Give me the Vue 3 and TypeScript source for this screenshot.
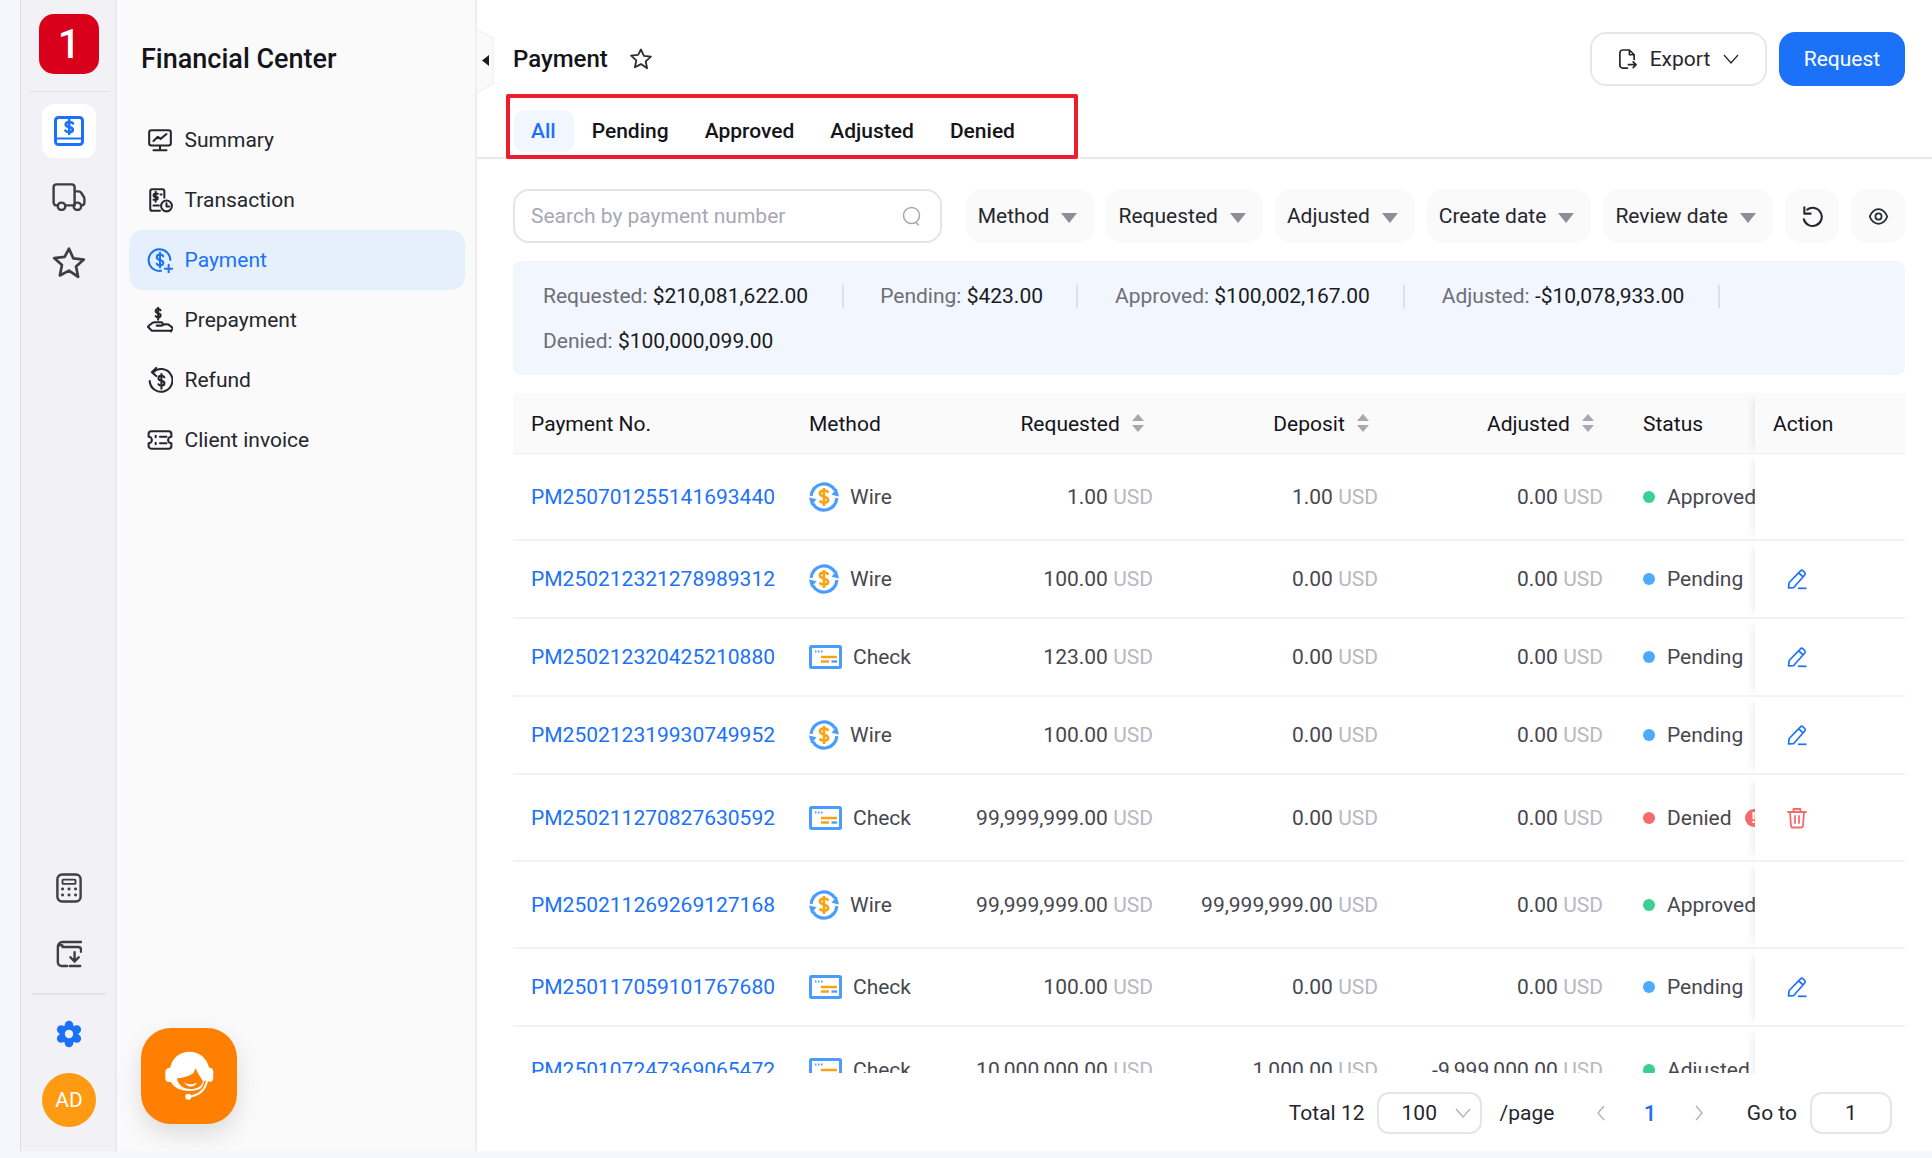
<script setup lang="ts">
interface NavItem {
  label: string;
  d: string;
  active?: boolean;
}

interface PaymentRow {
  no: string;
  method: 'Wire' | 'Check';
  requested: string;
  deposit: string;
  adjusted: string;
  status: 'Approved' | 'Pending' | 'Denied' | 'Adjusted';
  tall?: boolean;
}

const navItems: NavItem[] = [
  {
    label: 'Summary',
    d: 'M4 3h16a2 2 0 0 1 2 2v10a2 2 0 0 1-2 2H4a2 2 0 0 1-2-2V5a2 2 0 0 1 2-2zM12 17v4.5M6 21.5h12M6 13l4-4 2.5 2L18 6.5',
  },
  {
    label: 'Transaction',
    d: 'M5 2h9a2 2 0 0 1 2 2v6M12 22H5a2 2 0 0 1-2-2V4a2 2 0 0 1 2-2M10 6.2H7.5a1.3 1.3 0 0 0 0 2.8h1a1.3 1.3 0 0 1 0 2.8H6M8 4.5v9M12.5 7h1M6 17h5M23 17.5a5 5 0 1 1-10 0 5 5 0 0 1 10 0zM18 15v3h2.5',
  },
  {
    label: 'Payment',
    active: true,
    d: 'M21.5 12A10 10 0 1 0 13 22M15 8.5c-.5-1-1.6-1.5-3-1.5-1.8 0-3 1-3 2.4s1.2 2.1 3 2.6 3 1.2 3 2.6-1.2 2.4-3 2.4c-1.4 0-2.5-.5-3-1.5M12 5v14M20 16.5v7M16.5 20h7',
  },
  {
    label: 'Prepayment',
    d: 'M12.5 3c-.4-.8-1.2-1.2-2.2-1.2-1.3 0-2.3.8-2.3 1.9s1 1.7 2.3 2 2.3 1 2.3 2-1 1.9-2.3 1.9c-1 0-1.8-.4-2.2-1.2M10.3.2v11.5M1 18l3.5-3c1-.8 2-1 3-1H13a1.6 1.6 0 0 1 0 3.2H9M14.5 16.5l3-.5c1.5-.2 3 .5 3.5 1l3 2.5-2 3M1 18.5L4.5 22h17',
  },
  {
    label: 'Refund',
    d: 'M5.5 5A10.5 10.5 0 1 1 2.5 13M8.5.8l-4 4 4 3.5M16 9.5c-.5-.9-1.5-1.3-2.7-1.3-1.6 0-2.8.9-2.8 2.2s1.2 1.9 2.8 2.3 2.8 1.1 2.8 2.3-1.2 2.2-2.8 2.2c-1.2 0-2.2-.4-2.7-1.3M13.3 6.5V20',
  },
  {
    label: 'Client invoice',
    d: 'M4 4h16a2.5 2.5 0 0 1 2.5 2.5V9a3 3 0 0 0 0 6v2.5A2.5 2.5 0 0 1 20 20H4a2.5 2.5 0 0 1-2.5-2.5V15a3 3 0 0 0 0-6V6.5A2.5 2.5 0 0 1 4 4zM8 8v1.5M8 14.5V16M12 9h6M12 15h6',
  },
];

const tabs = ['All', 'Pending', 'Approved', 'Adjusted', 'Denied'];
const filters = ['Method', 'Requested', 'Adjusted', 'Create date', 'Review date'];

const totals = [
  { label: 'Requested:', value: '$210,081,622.00' },
  { label: 'Pending:', value: '$423.00' },
  { label: 'Approved:', value: '$100,002,167.00' },
  { label: 'Adjusted:', value: '-$10,078,933.00' },
  { label: 'Denied:', value: '$100,000,099.00' },
];

const rows: PaymentRow[] = [
  { no: 'PM250701255141693440', method: 'Wire', requested: '1.00', deposit: '1.00', adjusted: '0.00', status: 'Approved', tall: true },
  { no: 'PM250212321278989312', method: 'Wire', requested: '100.00', deposit: '0.00', adjusted: '0.00', status: 'Pending' },
  { no: 'PM250212320425210880', method: 'Check', requested: '123.00', deposit: '0.00', adjusted: '0.00', status: 'Pending' },
  { no: 'PM250212319930749952', method: 'Wire', requested: '100.00', deposit: '0.00', adjusted: '0.00', status: 'Pending' },
  { no: 'PM250211270827630592', method: 'Check', requested: '99,999,999.00', deposit: '0.00', adjusted: '0.00', status: 'Denied', tall: true },
  { no: 'PM250211269269127168', method: 'Wire', requested: '99,999,999.00', deposit: '99,999,999.00', adjusted: '0.00', status: 'Approved', tall: true },
  { no: 'PM250117059101767680', method: 'Check', requested: '100.00', deposit: '0.00', adjusted: '0.00', status: 'Pending' },
  { no: 'PM250107247369065472', method: 'Check', requested: '10,000,000.00', deposit: '1,000.00', adjusted: '-9,999,000.00', status: 'Adjusted', tall: true },
];

const sortable = ['Requested', 'Deposit', 'Adjusted'];

// six lobes round the settings gear
const gearLobes = [0, 1, 2, 3, 4, 5].map((i) => {
  const angle = (Math.PI / 3) * i - Math.PI / 2;
  return { cx: 13 + 9 * Math.cos(angle), cy: 14 + 9 * Math.sin(angle) };
});
</script>

<template>
  <div class="page">
    <div class="page__body">
      <aside class="rail">
        <div class="rail__logo">1</div>
        <div class="rail__line"></div>
        <div class="rail__item rail__item--active">
          <svg width="30" height="30" viewBox="0 0 30 30" fill="none" stroke="#1b72f9" stroke-width="3" stroke-linecap="round" stroke-linejoin="round">
            <rect x="1.5" y="1.5" width="27" height="27" rx="3" />
            <path d="M2 22.5h26" stroke-width="2.2" />
            <path d="M19 7.5c-.6-1-2-1.5-3.8-1.5-2 0-3.500.9-3.500 2.500s1.500 2.200 3.500 2.600 3.600 1 3.600 2.600-1.500 2.500-3.600 2.500c-1.800 0-3.200-.5-3.800-1.500M15.200 4v14" stroke-width="2.6" />
          </svg>
        </div>
        <div class="rail__item">
          <svg width="34" height="28" viewBox="0 0 36 30" fill="none" stroke="#3d3f45" stroke-width="2.6" stroke-linecap="round" stroke-linejoin="round">
            <path d="M23 24h-9M6 24H4.500a3 3 0 0 1-3-3V4.500a3 3 0 0 1 3-3H21a3 3 0 0 1 3 3V24M24 9h4.500c1 0 1.900.5 2.500 1.400l3 4.600c.3.500.5 1 .5 1.600V21a3 3 0 0 1-3 3h-.5" />
            <path d="M14 25a4 4 0 1 1-8 0 4 4 0 0 1 8 0zM31 25a4 4 0 1 1-8 0 4 4 0 0 1 8 0z" />
          </svg>
        </div>
        <div class="rail__item">
          <svg width="36" height="36" viewBox="0 0 24 24" fill="none" stroke="#3d3f45" stroke-width="1.8" stroke-linejoin="round">
            <path d="M12 2.500l2.900 6.400 7 .8-5.200 4.700 1.400 6.900L12 17.100l-6.100 3.200 1.400-6.900-5.200-4.700 7-.8z" />
          </svg>
        </div>
        <div class="rail__spacer"></div>
        <div class="rail__item">
          <svg width="26" height="30" viewBox="0 0 28 32" fill="none" stroke="#3d3f45" stroke-width="2.6">
            <rect x="1.5" y="1.5" width="25" height="29" rx="5" />
            <rect x="7" y="7" width="14" height="4.5" rx="1" stroke-width="2" />
            <path d="M7 17h.1M14 17h.1M21 17h.1M7 23.5h.1M14 23.5h.1M21 23.5h.1" stroke-width="3.2" stroke-linecap="round" />
          </svg>
        </div>
        <div class="rail__item">
          <svg width="26" height="28" viewBox="0 0 28 30" fill="none" stroke="#3d3f45" stroke-width="2.6" stroke-linecap="round">
            <path d="M27 2H7a5 5 0 0 0-5 5v17a4 4 0 0 0 4 4h6M7 7.5h17a3 3 0 0 1 3 3v2M2 7a4 4 0 0 1 5-1" />
            <path d="M20 13v10M15.500 18.500l4.500 4.500 4.500-4.500M15 28h11" />
          </svg>
        </div>
        <div class="rail__line rail__line--thick"></div>
        <div class="rail__item">
          <svg width="26" height="28" viewBox="0 0 26 28">
            <circle cx="13" cy="14" r="9.5" fill="#1b72f9" />
            <circle v-for="(lobe, i) in gearLobes" :key="i" :cx="lobe.cx" :cy="lobe.cy" r="4.3" fill="#1b72f9" />
            <circle cx="13" cy="14" r="4.2" fill="#f1f1f6" />
          </svg>
        </div>
        <div class="rail__avatar">AD</div>
      </aside>

      <nav class="side">
        <h2 class="side__title">Financial Center</h2>
        <a v-for="item in navItems" :key="item.label" class="side__item" :class="{ 'side__item--active': item.active }">
          <svg class="side__icon" width="26" height="26" viewBox="0 0 24 24" fill="none" stroke="currentColor" stroke-width="1.9" stroke-linecap="round" stroke-linejoin="round">
            <path :d="item.d" />
          </svg>
          <span>{{ item.label }}</span>
        </a>
        <button class="support">
          <svg width="96" height="96" viewBox="0 0 96 96">
            <path d="M28 54c-2.500 0-3.700-2-3.700-4v-6c0-2.500 2-4 5-4.500C31 30 39 23.700 48.500 23.700S66 30 68 39.500c3 .5 4.300 2 4.300 4.500v6c0 2-1.500 4-4 4h-2c-2 5-9 9-17.800 9S32 59 30 54z" fill="#fff" />
            <path d="M36 50.300C42 50 48 48 52.300 45.300L54.700 40.300C57 46 60 50 62.300 53.700 60 59 55 61 49 61 42 61 37 57 36 50.300z" fill="#ff8000" />
            <path d="M43 54c3 3 9 3 13 .5C54 60 46 60 43 54z" fill="#fff" />
            <path d="M66 53c-2 9-8 14.500-18 15.700" fill="none" stroke="#ff8000" stroke-width="5" />
            <path d="M66 53c-2 9-8 14.500-18 15.700" fill="none" stroke="#fff" stroke-width="2" stroke-linecap="round" />
            <circle cx="47.3" cy="68.7" r="3" fill="#fff" />
          </svg>
        </button>
      </nav>

      <main class="main">
        <svg class="collapse" width="18" height="66" viewBox="0 0 18 66">
          <path d="M0 1l17 9v46L0 65z" fill="#fafafa" stroke="#ececf0" />
          <path d="M13 27v11l-7-5.500z" fill="#1a1a22" />
        </svg>

        <header class="head">
          <h1 class="head__title">Payment</h1>
          <svg class="head__star" width="24" height="24" viewBox="0 0 24 24" fill="none" stroke="#2a2c33" stroke-width="1.8" stroke-linejoin="round">
            <path d="M12 2.500l2.900 6.400 7 .8-5.200 4.700 1.400 6.900L12 17.100l-6.100 3.200 1.400-6.900-5.200-4.700 7-.8z" />
          </svg>
          <button class="btn btn--ghost">
            <svg width="19" height="23" viewBox="0 0 20 24" fill="none" stroke="#26282e" stroke-width="1.8" stroke-linecap="round" stroke-linejoin="round">
              <path d="M10 21H5a3 3 0 0 1-3-3V5a3 3 0 0 1 3-3h7l5 5v5M12 2.500V7h4.500M11 17.500h8M16 14.500l3 3-3 3" />
            </svg>
            <span>Export</span>
            <svg width="16" height="10" viewBox="0 0 16 10" fill="none" stroke="#26282e" stroke-width="1.3">
              <path d="M1 1l7 8 7-8" />
            </svg>
          </button>
          <button class="btn btn--primary">Request</button>
        </header>

        <div class="tabs">
          <span v-for="(tab, i) in tabs" :key="tab" class="tabs__item" :class="{ 'tabs__item--active': i === 0 }">{{ tab }}</span>
        </div>
        <div class="mark"></div>

        <div class="content">
          <div class="tools">
            <div class="search">
              <span>Search by payment number</span>
              <svg width="22" height="22" viewBox="0 0 22 22" fill="none" stroke="#a8a8b2" stroke-width="1.5" stroke-linecap="round">
                <circle cx="10.5" cy="10.5" r="8" />
                <path d="M15 17.500l2.500 2.500" />
              </svg>
            </div>
            <div v-for="f in filters" :key="f" class="filter">
              <span>{{ f }}</span>
              <i class="filter__arrow"></i>
            </div>
            <div class="filter filter--icon">
              <svg width="23" height="23" viewBox="0 0 24 24" fill="none" stroke="#26282e" stroke-width="2.2" stroke-linecap="round" stroke-linejoin="round">
                <path d="M6.500 4.800A9.500 9.500 0 1 1 3 15M3.500 2.500v6.500H10" />
              </svg>
            </div>
            <div class="filter filter--icon">
              <svg width="21" height="21" viewBox="0 0 24 24" fill="none" stroke="#26282e" stroke-width="2">
                <path d="M12 3.500c4.500 0 8.500 4 10 8.500-1.500 4.500-5.500 8.500-10 8.500S3.500 16.500 2 12c1.500-4.500 5.500-8.500 10-8.500z" />
                <circle cx="12" cy="12" r="3.5" />
              </svg>
            </div>
          </div>

          <div class="totals">
            <div v-for="(t, i) in totals" :key="t.label" class="totals__item" :class="{ 'totals__item--last': i === totals.length - 1 }">
              <span class="totals__label">{{ t.label }}</span>
              {{ t.value }}
            </div>
          </div>

          <div class="table-wrap">
            <table class="table">
              <colgroup>
                <col class="col-no" />
                <col class="col-method" />
                <col class="col-requested" />
                <col class="col-amount" />
                <col class="col-amount" />
                <col class="col-status" />
                <col class="col-action" />
              </colgroup>
              <thead>
                <tr>
                  <th>Payment No.</th>
                  <th>Method</th>
                  <th v-for="h in sortable" :key="h" class="num num--head">
                    {{ h }}
                    <svg class="sort" width="14" height="20" viewBox="0 0 14 20" fill="#a8a8b0">
                      <path d="M7 1l6 7H1zM7 19l-6-7h12z" />
                    </svg>
                  </th>
                  <th class="status-cell">Status</th>
                  <th class="action-cell">Action</th>
                </tr>
              </thead>
              <tbody>
                <tr v-for="row in rows" :key="row.no" :class="row.tall ? 'row--tall' : 'row'">
                  <td class="link">{{ row.no }}</td>
                  <td>
                    <div class="method">
                      <svg v-if="row.method === 'Wire'" width="30" height="30" viewBox="1 1 28 28" fill="none">
                        <path d="M3 14A12 12 0 0 1 25.500 9M27 16A12 12 0 0 1 4.500 21" stroke="#4a9dff" stroke-width="3" />
                        <path d="M29 14.500l-7-1.500 5-6zM1 15.500l7 1.500-5 6z" fill="#4a9dff" />
                        <path d="M19 11c-.6-1.300-2.100-2-4-2-2.200 0-3.800 1.100-3.800 2.800s1.600 2.300 3.800 2.900 3.900 1.100 3.900 2.800-1.700 2.800-3.900 2.800c-1.900 0-3.400-.7-4-2M15 6.500v17" stroke="#f9a313" stroke-width="2.4" />
                      </svg>
                      <svg v-else width="33" height="24" viewBox="0 0 33 24" fill="none">
                        <rect x="1.5" y="1.5" width="30" height="21" rx="1" stroke="#4a9dff" stroke-width="3" />
                        <path d="M6 6.500h1.500M9 6.500h1.500M12 6.500h1.500" stroke="#4a9dff" stroke-width="2" />
                        <path d="M12 12h16M12 16.500h8" stroke="#f9a313" stroke-width="2.4" />
                        <path d="M22.500 16.500H28" stroke="#4a9dff" stroke-width="2.4" />
                      </svg>
                      <span>{{ row.method }}</span>
                    </div>
                  </td>
                  <td class="num">{{ row.requested }} <span class="usd">USD</span></td>
                  <td class="num">{{ row.deposit }} <span class="usd">USD</span></td>
                  <td class="num">{{ row.adjusted }} <span class="usd">USD</span></td>
                  <td class="status-cell">
                    <div class="status">
                      <i class="status__dot" :class="`status__dot--${row.status.toLowerCase()}`"></i>
                      <span>{{ row.status }}</span>
                      <b v-if="row.status === 'Denied'" class="status__warn">!</b>
                    </div>
                  </td>
                  <td class="action-cell">
                    <svg v-if="row.status === 'Pending'" width="22" height="22" viewBox="0 0 22 22" fill="none" stroke="#1b72f9" stroke-width="1.7" stroke-linejoin="round">
                      <path d="M2.500 20l.7-5.500L14.500 2.800a1.800 1.800 0 0 1 2.500 0l1.700 1.700a1.800 1.800 0 0 1 0 2.500L7.500 19.700zM12.800 4.800l4.400 4.300" />
                      <path d="M12 20.300h8.500" />
                    </svg>
                    <svg v-else-if="row.status === 'Denied'" width="22" height="22" viewBox="0 0 22 22" fill="none" stroke="#f56b6b" stroke-width="1.8" stroke-linecap="round" stroke-linejoin="round">
                      <path d="M2 5h18M7.500 5V2h7v3M4 5l1 14a2 2 0 0 0 2 1.500h8a2 2 0 0 0 2-1.500l1-14M9 9v7M13 9v7" />
                    </svg>
                  </td>
                </tr>
              </tbody>
            </table>
          </div>

          <div class="pager">
            <span>Total 12</span>
            <div class="pager__box pager__box--size">
              <span>100</span>
              <svg width="16" height="10" viewBox="0 0 16 10" fill="none" stroke="#b0b0b8" stroke-width="1.3">
                <path d="M1 1l7 8 7-8" />
              </svg>
            </div>
            <span class="pager__unit">/page</span>
            <svg class="pager__prev" width="10" height="16" viewBox="0 0 10 16" fill="none" stroke="#b0b0b8" stroke-width="1.3">
              <path d="M8 1L2 8l6 7" />
            </svg>
            <span class="pager__num">1</span>
            <svg class="pager__next" width="10" height="16" viewBox="0 0 10 16" fill="none" stroke="#b0b0b8" stroke-width="1.3">
              <path d="M2 1l6 7-6 7" />
            </svg>
            <span class="pager__goto">Go to</span>
            <div class="pager__box pager__box--input">1</div>
          </div>
        </div>
      </main>
    </div>
  </div>
</template>

<style>
html,
body {
  margin: 0;
  overflow: hidden;
  font-family: Roboto, 'Liberation Sans', sans-serif;
}
</style>

<style scoped>
.page {
  width: 1932px;
  height: 1158px;
  box-sizing: border-box;
  background: #f5f7fc;
  padding-left: 20px;
}

.page__body {
  display: flex;
  height: 1151px;
  border-left: 1px solid #dcdce2;
}

.rail {
  width: 96px;
  flex: none;
  box-sizing: border-box;
  background: #f1f1f6;
  border-right: 2px solid #e8e8ee;
  display: flex;
  flex-direction: column;
  align-items: center;
  padding: 14px 0 0 2px;
}

.rail__logo {
  width: 60px;
  height: 60px;
  background: #d9001b;
  border-radius: 15px;
  color: #fff;
  font-size: 40px;
  font-weight: 500;
  line-height: 62px;
  text-align: center;
}

.rail__line {
  width: 81px;
  height: 1px;
  background: #e2e2e8;
  margin: 17px 0 12px;
}

.rail__line--thick {
  width: 74px;
  height: 2px;
  margin: 0 0 12px;
}

.rail__item {
  width: 54px;
  height: 54px;
  display: flex;
  align-items: center;
  justify-content: center;
  margin-bottom: 12px;
}

.rail__item--active {
  background: #fff;
  border-radius: 12px;
}

.rail__spacer {
  flex: 1;
}

.rail__avatar {
  width: 54px;
  height: 54px;
  border-radius: 50%;
  background: #ff9a13;
  color: #fff;
  font-size: 21px;
  line-height: 54px;
  text-align: center;
  margin-bottom: 24px;
}

.side {
  position: relative;
  width: 360px;
  flex: none;
  box-sizing: border-box;
  background: #fafafa;
  border-right: 2px solid #eeeef2;
  padding: 0 10px 0 12px;
}

.side__title {
  margin: 0 0 35px;
  padding: 43px 0 0 12px;
  font-size: 27px;
  line-height: 32px;
  font-weight: 500;
  color: #14141a;
}

.side__item {
  height: 60px;
  display: flex;
  align-items: center;
  gap: 12px;
  padding-left: 17.5px;
  border-radius: 14px;
  font-size: 21px;
  color: #26262e;
}

.side__item--active {
  background: #e6f0fd;
  color: #1b72f9;
}

.support {
  position: absolute;
  left: 24px;
  bottom: 27px;
  width: 96px;
  height: 96px;
  padding: 0;
  border: none;
  border-radius: 30px;
  background: #ff8000;
  box-shadow: 0 10px 24px rgba(0, 0, 0, 0.12);
}

.support svg {
  display: block;
}

.main {
  position: relative;
  flex: 1;
  min-width: 0;
  background: #fff;
}

.collapse {
  position: absolute;
  left: -1px;
  top: 28px;
}

.head {
  height: 110px;
  box-sizing: border-box;
  display: flex;
  align-items: flex-start;
  padding: 32px 27px 0 36px;
}

.head__title {
  margin: 0;
  font-size: 24px;
  font-weight: 500;
  line-height: 54px;
  color: #14141a;
}

.head__star {
  margin: 15px 0 0 21px;
}

.btn {
  height: 54px;
  box-sizing: border-box;
  font-family: inherit;
  font-size: 21px;
  border-radius: 16px;
}

.btn--ghost {
  margin-left: auto;
  width: 177px;
  display: flex;
  align-items: center;
  justify-content: center;
  gap: 13px;
  background: #fff;
  border: 2px solid #e8e8ec;
  color: #26262e;
}

.btn--primary {
  margin-left: 12px;
  width: 126px;
  background: #1b72f9;
  border: none;
  color: #fff;
}

.tabs {
  height: 47px;
  display: flex;
  gap: 18px;
  padding-left: 37px;
  border-bottom: 2px solid #e8e8ec;
}

.tabs__item {
  height: 42px;
  margin-right: 18px;
  font-size: 21px;
  font-weight: 500;
  line-height: 42px;
  color: #14141a;
  border-radius: 10px;
}

.tabs__item--active {
  padding: 0 18px 0 17px;
  margin-right: 0;
  background: #f2f6fe;
  color: #1b72f9;
}

.mark {
  position: absolute;
  left: 29px;
  top: 94px;
  width: 572px;
  height: 65px;
  box-sizing: border-box;
  border: 4px solid #ee1c2e;
  border-radius: 2px;
}

.content {
  padding: 30px 27px 0 36px;
}

.tools {
  display: flex;
  gap: 12px;
  height: 54px;
}

.search {
  width: 429px;
  margin-right: 12px;
  box-sizing: border-box;
  display: flex;
  align-items: center;
  justify-content: space-between;
  padding: 0 17px 0 16px;
  border: 2px solid #e4e4ea;
  border-radius: 16px;
  font-size: 21px;
  color: #a8a8b2;
}

.filter {
  flex: none;
  display: flex;
  align-items: center;
  gap: 12px;
  padding: 0 17px 0 12px;
  background: #fafafa;
  border-radius: 16px;
  font-size: 21px;
  color: #26262e;
  white-space: nowrap;
}

.filter__arrow {
  width: 0;
  height: 0;
  border-left: 8px solid transparent;
  border-right: 8px solid transparent;
  border-top: 10px solid #8e8e98;
  margin-top: 3px;
}

.filter--icon {
  width: 54px;
  box-sizing: border-box;
  padding: 0;
  justify-content: center;
}

.totals {
  margin-top: 18px;
  height: 114px;
  box-sizing: border-box;
  padding: 13px 30px 0;
  display: flex;
  flex-wrap: wrap;
  align-content: flex-start;
  background: #f2f6fe;
  border-radius: 8px;
}

.totals__item {
  position: relative;
  height: 45px;
  line-height: 45px;
  font-size: 21px;
  color: #1a1a22;
  padding-right: 35.5px;
  margin-right: 36.5px;
}

.totals__item::after {
  content: '';
  position: absolute;
  right: 0;
  top: 11px;
  width: 2px;
  height: 23px;
  background: #dfe0e6;
}

.totals__item--last::after {
  display: none;
}

.totals__label {
  color: #6e6e78;
}

.table-wrap {
  margin-top: 18px;
  height: 680px;
  overflow: hidden;
}

.table {
  width: 1392px;
  table-layout: fixed;
  border-collapse: separate;
  border-spacing: 0;
  font-size: 21px;
  color: #47474f;
}

.col-no {
  width: 278px;
}

.col-method {
  width: 150px;
}

.col-requested {
  width: 230px;
}

.col-amount {
  width: 225px;
}

.col-status {
  width: 134px;
}

.col-action {
  width: 150px;
}

.table th {
  height: 58px;
  padding: 2px 18px 0;
  background: #fafafa;
  border-bottom: 1px solid #f0f0f3;
  font-weight: 400;
  text-align: left;
  color: #14141a;
}

.table td {
  padding: 0 18px;
  border-bottom: 2px solid #f3f3f5;
  white-space: nowrap;
}

.row td {
  height: 76px;
}

.row--tall td {
  height: 85px;
}

.table .num {
  text-align: right;
}

.table .num--head {
  padding-right: 26px;
}

.sort {
  vertical-align: -2px;
  margin-left: 6px;
}

.usd {
  color: #b8b8c2;
}

.table .link {
  color: #1b72f9;
}

.method {
  display: flex;
  align-items: center;
  gap: 11px;
}

.table .status-cell {
  padding: 2px 0 0 22px;
  overflow: hidden;
}

.table td.status-cell {
  padding-top: 0;
}

.status {
  display: flex;
  align-items: center;
}

.status__dot {
  flex: none;
  width: 12px;
  height: 12px;
  border-radius: 50%;
  margin-right: 12px;
}

.status__dot--approved,
.status__dot--adjusted {
  background: #3ad08f;
}

.status__dot--pending {
  background: #4cabff;
}

.status__dot--denied {
  background: #f56b6b;
}

.status__warn {
  flex: none;
  width: 18px;
  height: 18px;
  margin-left: 13px;
  border-radius: 50%;
  background: #f56b6b;
  color: #fff;
  font-size: 15px;
  line-height: 18px;
  text-align: center;
}

.table .action-cell {
  box-shadow: -8px 0 8px -6px rgba(0, 0, 0, 0.08);
}

.table td.action-cell {
  padding-left: 31px;
  background: #fff;
}

.action-cell svg {
  display: block;
}

.pager {
  height: 78px;
  box-sizing: border-box;
  padding: 2px 13px 0 0;
  display: flex;
  align-items: center;
  justify-content: flex-end;
  font-size: 21px;
  color: #26262e;
}

.pager__box {
  height: 42px;
  box-sizing: border-box;
  border: 2px solid #e4e4ea;
  border-radius: 12px;
  display: flex;
  align-items: center;
}

.pager__box--size {
  width: 105px;
  margin-left: 12px;
  padding: 0 9px 0 23px;
  justify-content: space-between;
}

.pager__box--input {
  width: 82px;
  margin-left: 13px;
  justify-content: center;
}

.pager__unit {
  margin-left: 18px;
}

.pager__prev {
  margin-left: 42px;
}

.pager__num {
  margin-left: 37.5px;
  color: #1b72f9;
  font-size: 22px;
  font-weight: 500;
}

.pager__next {
  margin-left: 38px;
}

.pager__goto {
  margin-left: 42.5px;
}
</style>
